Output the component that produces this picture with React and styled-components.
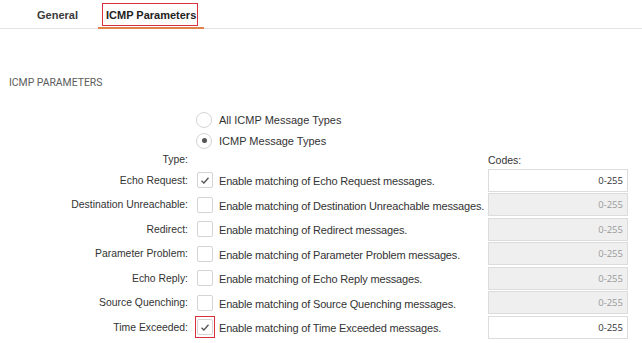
import React from "react";
import styled, { createGlobalStyle } from "styled-components";

const Global = createGlobalStyle`
  html, body { margin: 0; padding: 0; background: #fff; }
  body { font-family: "Liberation Sans", Arial, sans-serif; color: #333; }
  * { box-sizing: border-box; }
`;

const Page = styled.div`
  width: 642px;
  height: 343px;
  overflow: hidden;
  background: #fff;
`;

const TabBar = styled.div`
  display: flex;
  gap: 12px;
  padding-left: 29px;
  height: 29px;
  border-bottom: 1px solid #e3e3e3;
`;

const Tab = styled.div`
  position: relative;
  padding: 0 8px;
  height: 29px;
  line-height: 30px;
  font-size: 11px;
  font-weight: bold;
  color: ${(p) => (p.$active ? "#222" : "#3a3a3a")};
  border-bottom: 2px solid ${(p) => (p.$active ? "#e0824a" : "transparent")};
`;

const Highlight = styled.span`
  position: absolute;
  left: 4px;
  right: 6px;
  top: 3px;
  height: 23px;
  border: 1.5px solid #d8313a;
  pointer-events: none;
`;

const SectionTitle = styled.div`
  margin: 47px 0 0 9px;
  font-family: Roboto, "Liberation Sans", sans-serif;
  font-size: 10.4px;
  line-height: 14px;
  color: #5c5c5c;
  text-transform: uppercase;
`;

const Form = styled.div`
  margin-top: 19px;
  display: flex;
  flex-direction: column;
`;

const RadioRow = styled.label`
  display: flex;
  align-items: center;
  height: 21px;
  padding-left: 196px;
  font-size: 11px;
  color: #333;
`;

const RadioCircle = styled.span`
  width: 16px;
  height: 16px;
  border-radius: 50%;
  border: 1px solid #d4d4d4;
  background: #fff;
  display: flex;
  align-items: center;
  justify-content: center;
  margin-right: 7px;
  flex: none;
  &::after {
    content: "";
    width: 5px;
    height: 5px;
    border-radius: 50%;
    background: ${(p) => (p.$checked ? "#555" : "transparent")};
  }
`;

const Row = styled.div`
  display: flex;
  align-items: center;
  height: ${(p) => p.$h || "24.5px"};
  font-size: 11px;
`;

const Label = styled.div`
  width: 188px;
  text-align: right;
  color: #333;
  flex: none;
  font-size: 10.4px;
  white-space: nowrap;
`;

const CheckWrap = styled.span`
  position: relative;
  margin-left: 9px;
  width: 16px;
  height: 16px;
  flex: none;
`;

const CheckBox = styled.span`
  display: flex;
  width: 16px;
  height: 16px;
  border: 1px solid #d4d4d4;
  border-radius: 2px;
  background: #fff;
  align-items: center;
  justify-content: center;
`;

const CheckOutline = styled.span`
  position: absolute;
  left: -2px;
  top: -3px;
  width: 20px;
  height: 22px;
  border: 1.5px solid #d8313a;
  pointer-events: none;
`;

const Desc = styled.div`
  margin-left: 6px;
  width: 269px;
  flex: none;
  color: #333;
  padding-top: 2px;
  white-space: nowrap;
  letter-spacing: -0.17px;
`;

const Spacer = styled.div`
  width: 300px;
  flex: none;
`;

const CodesLabel = styled.div`
  color: #333;
  font-size: 10.5px;
`;

const CodeInput = styled.div`
  width: 140px;
  height: 23px;
  flex: none;
  border: 1px solid #dcdcdc;
  background: ${(p) => (p.$disabled ? "#efefef" : "#fff")};
  color: ${(p) => (p.$disabled ? "#9a9a9a" : "#333")};
  font-family: "Open Sans", "DejaVu Sans", sans-serif;
  font-size: 9.5px;
  line-height: 21px;
  text-align: right;
  padding-right: 4px;
`;

const Check = () => (
  <svg width="10" height="9" viewBox="0 0 10 9">
    <path d="M1.5 4.8 L3.9 7 L8.5 1.8" fill="none" stroke="#555" strokeWidth="1.3" />
  </svg>
);

const rows = [
  { label: "Echo Request:", name: "Echo Request", checked: true },
  { label: "Destination Unreachable:", name: "Destination Unreachable" },
  { label: "Redirect:", name: "Redirect" },
  { label: "Parameter Problem:", name: "Parameter Problem" },
  { label: "Echo Reply:", name: "Echo Reply" },
  { label: "Source Quenching:", name: "Source Quenching" },
  { label: "Time Exceeded:", name: "Time Exceeded", checked: true, outlined: true },
];

export default function App() {
  return (
    <Page>
      <Global />
      <TabBar>
        <Tab>General</Tab>
        <Tab $active>
          ICMP Parameters
          <Highlight />
        </Tab>
      </TabBar>
      <SectionTitle>ICMP Parameters</SectionTitle>
      <Form>
        <RadioRow>
          <RadioCircle />
          All ICMP Message Types
        </RadioRow>
        <RadioRow>
          <RadioCircle $checked />
          ICMP Message Types
        </RadioRow>
        <Row $h="17px">
          <Label>Type:</Label>
          <Spacer />
          <CodesLabel>Codes:</CodesLabel>
        </Row>
        {rows.map((r) => (
          <Row key={r.name}>
            <Label>{r.label}</Label>
            <CheckWrap>
              <CheckBox>{r.checked && <Check />}</CheckBox>
              {r.outlined && <CheckOutline />}
            </CheckWrap>
            <Desc>Enable matching of {r.name} messages.</Desc>
            <CodeInput $disabled={!r.checked}>0-255</CodeInput>
          </Row>
        ))}
      </Form>
    </Page>
  );
}
